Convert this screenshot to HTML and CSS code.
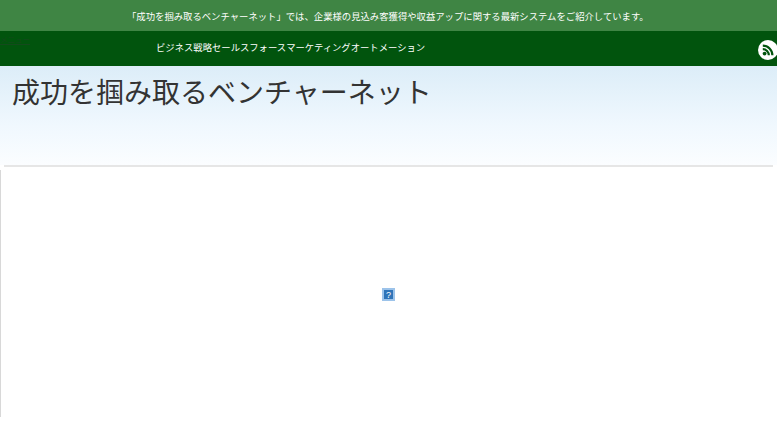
FILE: index.html
```html
<!DOCTYPE html>
<html lang="ja">
<head>
<meta charset="utf-8">
<title>成功を掴み取るベンチャーネット</title>
<link rel="stylesheet" href="styles.css">
</head>
<body>
<div class="topbar"><p class="tagline">「成功を掴み取るベンチャーネット」では、企業様の見込み客獲得や収益アップに関する最新システムをご紹介しています。</p></div>
<nav class="navbar">
  <span class="skip">メニュー</span>
  <ul class="menu">
    <li>ビジネス戦略</li>
    <li>セールスフォース</li>
    <li>マーケティングオートメーション</li>
  </ul>
  <svg class="rss" viewBox="0 0 20 20" aria-label="RSS">
    <circle cx="10" cy="10" r="10" fill="#fff"/>
    <circle cx="6.6" cy="13.6" r="1.9" fill="#01540d"/>
    <path d="M4.8 9.2a6 6 0 0 1 6 6M4.8 5.6a9.6 9.6 0 0 1 9.6 9.6" fill="none" stroke="#01540d" stroke-width="2.2"/>
  </svg>
</nav>
<header class="masthead"><h1 class="title">成功を掴み取るベンチャーネット</h1></header>
<hr class="divider">
<main class="content">
  <svg class="broken" viewBox="0 0 13 13" aria-label="?">
    <rect width="13" height="13" fill="#9cc3ea"/>
    <rect x="2" y="2" width="9" height="9" fill="#2f74b8"/>
    <text x="6.5" y="10" class="broken-q">?</text>
  </svg>
</main>
</body>
</html>
```
FILE: styles.css
```css
* { box-sizing: border-box; }
html, body { margin: 0; padding: 0; }
body {
  background: #fff;
  font-family: "Noto Sans CJK JP", "Liberation Sans", sans-serif;
  overflow: hidden;
  height: 423px;
}
.topbar {
  height: 31px;
  background: #3f8544;
  display: flex;
  align-items: center;
  padding-left: 127px;
}
.tagline {
  margin: 0;
  color: #fff;
  font-size: 9.36px;
  white-space: nowrap;
}
.navbar {
  height: 35px;
  background: #01540d;
  display: flex;
  align-items: center;
  padding-left: 156px;
  position: relative;
}
.skip {
  position: absolute;
  left: 0;
  top: 3px;
  font-size: 7.5px;
  color: #14491c;
  text-decoration: underline;
}
.menu {
  display: flex;
  margin: 0 0 3px;
  padding: 0;
  list-style: none;
  color: #fff;
  font-size: 9.33px;
  white-space: nowrap;
}
.rss {
  width: 20px;
  height: 20px;
  margin-left: auto;
  margin-right: -1px;
  margin-top: 2px;
}
.masthead {
  height: 99px;
  padding: 7px 12px 0;
  background: linear-gradient(#dcedf8, #f0f8fe 60%, #fbfdff);
}
.title {
  margin: 0;
  font-size: 28px;
  font-weight: 400;
  line-height: 36px;
  color: #333;
  white-space: nowrap;
}
.divider {
  margin: 0 4px;
  border: 0;
  height: 2px;
  background: #e6e6e6;
}
.content {
  height: 247px;
  margin-top: 3px;
  border-left: 1px solid #d8d8d8;
  display: flex;
  justify-content: center;
  align-items: center;
  padding: 2px 2px 0 0;
}
.broken { width: 13px; height: 13px; }
.broken-q { font-family: "Liberation Sans", sans-serif; font-size: 9px; font-weight: 400; fill: #fff; text-anchor: middle; }
```
